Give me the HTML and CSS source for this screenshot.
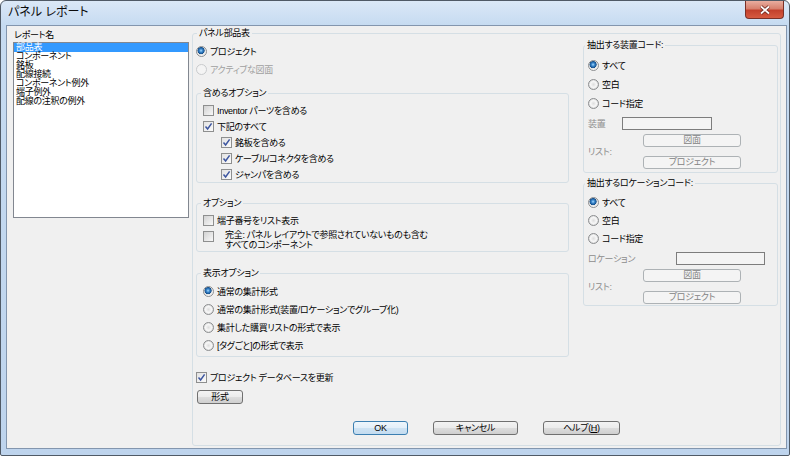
FILE: index.html
```html
<!DOCTYPE html>
<html lang="ja">
<head>
    <meta charset="UTF-8">
    <title>パネル レポート</title>
    <link rel="stylesheet" href="styles.css">
</head>
<body>

<div class="window">
    <div class="titlebar">
        <span class="title">パネル レポート</span>
        <div class="close-btn">
            <svg width="12" height="10" viewBox="0 0 12 10">
                <path d="M2 1.5 L10 8.5 M10 1.5 L2 8.5" stroke="#6e2a22" stroke-width="3.4" fill="none"/>
                <path d="M2 1.5 L10 8.5 M10 1.5 L2 8.5" stroke="#ffffff" stroke-width="1.8" fill="none"/>
            </svg>
        </div>
    </div>

    <div class="client">
        <!-- レポートの一覧 -->
        <div class="report-pane">
            <div class="pane-label">レポート名</div>
            <ul class="listbox">
                <li class="selected">部品表</li>
                <li>コンポーネント</li>
                <li>銘板</li>
                <li>配線接続</li>
                <li>コンポーネント例外</li>
                <li>端子例外</li>
                <li>配線の注釈の例外</li>
            </ul>
        </div>

        <fieldset class="group panel">
            <legend>パネル部品表</legend>
            <div class="panel-top">
                <div class="col-main">
                    <div class="radio-row first"><span class="radio checked"></span>プロジェクト</div>
                    <div class="radio-row disabled"><span class="radio"></span>アクティブな図面</div>

                    <fieldset class="group include-group">
                        <legend>含めるオプション</legend>
                        <div class="check-row"><span class="check"></span>Inventor パーツを含める</div>
                        <div class="check-row"><span class="check checked"><svg width="9" height="9" viewBox="0 0 9 9"><path d="M1.5 4.6 L3.6 7 L7.6 1.4" stroke="#3d56a0" stroke-width="1.5" fill="none"/></svg></span>下記のすべて</div>
                        <div class="check-row sub"><span class="check checked"><svg width="9" height="9" viewBox="0 0 9 9"><path d="M1.5 4.6 L3.6 7 L7.6 1.4" stroke="#3d56a0" stroke-width="1.5" fill="none"/></svg></span>銘板を含める</div>
                        <div class="check-row sub"><span class="check checked"><svg width="9" height="9" viewBox="0 0 9 9"><path d="M1.5 4.6 L3.6 7 L7.6 1.4" stroke="#3d56a0" stroke-width="1.5" fill="none"/></svg></span>ケーブル/コネクタを含める</div>
                        <div class="check-row sub"><span class="check checked"><svg width="9" height="9" viewBox="0 0 9 9"><path d="M1.5 4.6 L3.6 7 L7.6 1.4" stroke="#3d56a0" stroke-width="1.5" fill="none"/></svg></span>ジャンパを含める</div>
                    </fieldset>

                    <fieldset class="group option-group">
                        <legend>オプション</legend>
                        <div class="check-row"><span class="check"></span>端子番号をリスト表示</div>
                        <div class="check-row multi">
                            <span class="check"></span>
                            <span class="multi-text">完全: パネル レイアウトで参照されていないものも含む<br>すべてのコンポーネント</span>
                        </div>
                    </fieldset>

                    <fieldset class="group display-group">
                        <legend>表示オプション</legend>
                        <div class="radio-row"><span class="radio checked"></span>通常の集計形式</div>
                        <div class="radio-row"><span class="radio"></span>通常の集計形式(装置/ロケーションでグループ化)</div>
                        <div class="radio-row"><span class="radio"></span>集計した購買リストの形式で表示</div>
                        <div class="radio-row"><span class="radio"></span>[タグごと]の形式で表示</div>
                    </fieldset>
                </div>

                <div class="col-side">
                    <fieldset class="group code-group">
                        <legend>抽出する装置コード:</legend>
                        <div class="radio-row"><span class="radio checked"></span>すべて</div>
                        <div class="radio-row"><span class="radio"></span>空白</div>
                        <div class="radio-row"><span class="radio"></span>コード指定</div>
                        <div class="field-row">
                            <span class="field-label">装置</span>
                            <span class="text-input device-input"></span>
                        </div>
                        <div class="list-row">
                            <span class="field-label list-label">リスト:</span>
                            <div class="list-buttons">
                                <button class="btn disabled">図面</button>
                                <button class="btn disabled">プロジェクト</button>
                            </div>
                        </div>
                    </fieldset>

                    <fieldset class="group code-group location-group">
                        <legend>抽出するロケーションコード:</legend>
                        <div class="radio-row"><span class="radio checked"></span>すべて</div>
                        <div class="radio-row"><span class="radio"></span>空白</div>
                        <div class="radio-row"><span class="radio"></span>コード指定</div>
                        <div class="field-row">
                            <span class="field-label location-label">ロケーション</span>
                            <span class="text-input location-input"></span>
                        </div>
                        <div class="list-row">
                            <span class="field-label list-label">リスト:</span>
                            <div class="list-buttons">
                                <button class="btn disabled">図面</button>
                                <button class="btn disabled">プロジェクト</button>
                            </div>
                        </div>
                    </fieldset>
                </div>
            </div>

            <div class="check-row db-row"><span class="check checked"><svg width="9" height="9" viewBox="0 0 9 9"><path d="M1.5 4.6 L3.6 7 L7.6 1.4" stroke="#3d56a0" stroke-width="1.5" fill="none"/></svg></span>プロジェクト データベースを更新</div>
            <button class="btn format-btn">形式</button>

            <div class="dialog-buttons">
                <button class="btn default ok-btn">OK</button>
                <button class="btn cancel-btn">キャンセル</button>
                <button class="btn help-btn">ヘルプ(<u>H</u>)</button>
            </div>
        </fieldset>
    </div>
</div>

</body>
</html>
```

FILE: styles.css
```css
* {
    box-sizing: border-box;
}

body {
    margin: 0;
    font-family: "Liberation Sans", "Noto Sans CJK JP", sans-serif;
    font-size: 9px;
    font-feature-settings: "palt";
    letter-spacing: -0.3px;
    color: #000;
    background: #fff;
}

.window {
    width: 790px;
    height: 456px;
    border: 1px solid #505a66;
    border-radius: 6px 6px 2px 2px;
    background: linear-gradient(#dbe8f7, #c6dbf1 24px, #bed4ed);
    display: flex;
    flex-direction: column;
}

.titlebar {
    height: 24px;
    display: flex;
    align-items: flex-start;
}

.title {
    padding-left: 7px;
    font-size: 12px;
    letter-spacing: 0;
    line-height: 22px;
    color: #0c0c0c;
}

.close-btn {
    margin-left: auto;
    margin-right: 5px;
    width: 39px;
    height: 18px;
    border: 1px solid #7a3027;
    border-top: none;
    border-radius: 0 0 4px 4px;
    background: linear-gradient(#e9ad9f, #d7806e 45%, #c3402c 55%, #d65a40);
    display: flex;
    justify-content: center;
    align-items: center;
}

.client {
    flex: 1;
    margin: 0 2px 6px 5px;
    border: 1px solid #8396ae;
    background: #f0f0f0;
    display: flex;
}

/* left list */
.report-pane {
    margin-left: 6px;
    width: 176px;
    padding-top: 4px;
}

.pane-label {
    line-height: 11px;
    padding-left: 1px;
}

.listbox {
    list-style: none;
    margin: 1px 0 0;
    padding: 0;
    height: 176px;
    border: 1px solid #828790;
    background: #fff;
}

.listbox li {
    height: 9px;
    line-height: 9px;
    padding-left: 2px;
    white-space: nowrap;
}

.listbox li.selected {
    background: #3399ff;
    color: #fff;
}

/* group boxes */
.group {
    margin: 0;
    min-width: 0;
    border: 1px solid #d5dfe5;
    border-radius: 3px;
    padding: 0 0 0 6px;
}

.group legend {
    padding: 0 2px;
    margin-left: -2px;
    line-height: 10px;
}

.panel {
    margin: 2px 0 2px 3px;
    width: 589px;
    padding: 0 0 0 3px;
}

.panel > legend {
    margin-left: 1px;
}

.panel-top {
    display: flex;
    align-items: flex-start;
    gap: 14px;
}

.col-main {
    width: 373px;
}

.col-side {
    width: 195px;
}

.radio-row {
    height: 18px;
    display: flex;
    align-items: center;
    gap: 3px;
    white-space: nowrap;
}

.radio-row.first {
    margin-top: 4px;
}

.radio-row.disabled {
    color: #a0a0a0;
}

.radio {
    width: 11px;
    height: 11px;
    border-radius: 50%;
    border: 1px solid #8c8e90;
    background: radial-gradient(circle, #dedede 0, #f7f7f7 3px, #d6d6d6 5px);
    flex: none;
}

.radio.checked {
    background: radial-gradient(circle at 45% 40%, #a6dcff 0, #3a86cc 1.6px, #15508c 3.3px, #e2e2e2 3.8px, #f3f3f3 5px);
}

.radio-row.disabled .radio {
    border-color: #c9cbcd;
    background: #f4f4f4;
}

.check-row {
    height: 16px;
    display: flex;
    align-items: center;
    gap: 3px;
    white-space: nowrap;
}

.check-row.sub {
    margin-left: 18px;
}

.check {
    width: 11px;
    height: 11px;
    border: 1px solid #8e8f8f;
    background: linear-gradient(135deg, #d2d2d2, #f8f8f8);
    flex: none;
    display: flex;
    justify-content: center;
    align-items: center;
}

.check.checked {
    background: linear-gradient(135deg, #e2e2e2, #fbfbfb);
}

.include-group {
    margin-top: 10px;
    padding-top: 4px;
}

.option-group {
    margin-top: 15px;
    padding-top: 4px;
    padding-bottom: 1px;
}

.check-row.multi {
    height: 22px;
    align-items: flex-start;
    padding-top: 2px;
    gap: 11px;
}

.check-row.multi .check {
    margin-top: 1px;
}

.multi-text {
    line-height: 10px;
}

.display-group {
    margin-top: 16px;
    padding-top: 4px;
    padding-bottom: 2px;
}

/* right side code groups */
.code-group {
    margin-top: 2px;
    padding: 6px 0 3px 4px;
}

.code-group legend {
    margin-left: -3px;
}

.code-group .radio-row {
    height: 19px;
}

.location-group {
    margin-top: 5px;
    padding-top: 5px;
    padding-bottom: 1px;
}

.location-group .radio-row {
    height: 18px;
}

.field-row {
    margin-top: 4px;
    height: 13px;
    display: flex;
    align-items: center;
}

.location-group .field-row {
    margin-top: 5px;
}

.field-label {
    color: #8d8d8d;
    width: 34px;
    flex: none;
}

.field-label.location-label {
    width: 88px;
}

.text-input {
    height: 13px;
    border: 1px solid #7d7d7d;
    background: #f4f4f4;
}

.device-input {
    width: 90px;
}

.location-input {
    width: 89px;
}

.list-row {
    margin-top: 4px;
    display: flex;
    align-items: center;
}

.list-label {
    width: 55px;
}

.list-buttons {
    display: flex;
    flex-direction: column;
    gap: 9px;
}

/* buttons */
.btn {
    font-family: inherit;
    font-size: 9px;
    font-feature-settings: "palt";
    letter-spacing: -0.3px;
    height: 14px;
    padding: 0;
    line-height: 12px;
    color: #000;
    border: 1px solid #707070;
    border-radius: 3px;
    background: linear-gradient(#f3f3f3, #ebebeb 50%, #dddddd 50%, #cfcfcf);
}

.btn.disabled {
    width: 98px;
    height: 13px;
    line-height: 11px;
    color: #838383;
    border-color: #adb2b5;
    background: #f4f4f4;
}

.btn.default {
    border-color: #3c7fb1;
    background: linear-gradient(#eef6fc, #e3eff9 50%, #cfe3f3 50%, #c4dcf0);
}

.db-row {
    margin-top: 12px;
}

.format-btn {
    display: block;
    margin: 5px 0 0 1px;
    width: 46px;
}

.dialog-buttons {
    margin-top: 17px;
    padding-left: 157px;
    display: flex;
    gap: 25px;
}

.ok-btn {
    width: 55px;
}

.cancel-btn {
    width: 85px;
}

.help-btn {
    width: 77px;
}
```
